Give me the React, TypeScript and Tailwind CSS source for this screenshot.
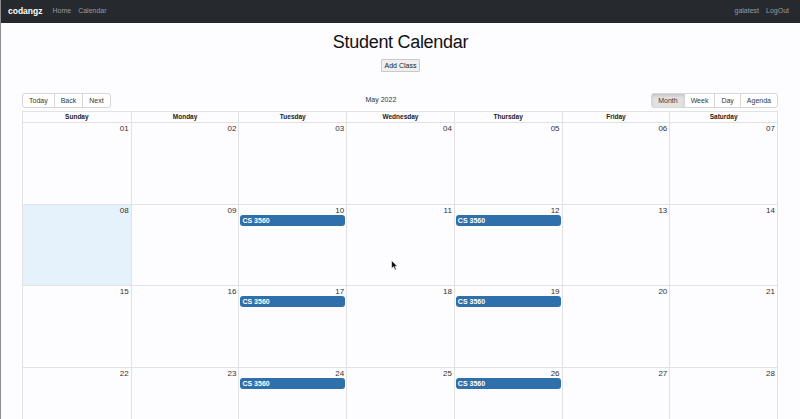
import React from "react";

const days = ["Sunday", "Monday", "Tuesday", "Wednesday", "Thursday", "Friday", "Saturday"];
const rowHeights = ["h-[82px]", "h-[81px]", "h-[82px]", "h-[82px]", "h-[82px]"];

type Cell = { label: string; today?: boolean; event?: string; off?: boolean };

function buildWeeks(): Cell[][] {
  const weeks: Cell[][] = [];
  let d = 1;
  for (let w = 0; w < 5; w++) {
    const row: Cell[] = [];
    for (let i = 0; i < 7; i++) {
      const off = d > 31;
      const n = off ? d - 31 : d;
      row.push({
        label: String(n).padStart(2, "0"),
        today: !off && n === 8,
        off,
        event: !off && n >= 10 && (i === 2 || i === 4) ? "CS 3560" : undefined,
      });
      d++;
    }
    weeks.push(row);
  }
  return weeks;
}

function ToolBtn({ children, active, first, last }: { children: React.ReactNode; active?: boolean; first?: boolean; last?: boolean }) {
  return (
    <button
      className={
        "h-[15px] px-[6px] border border-[#d6d6d6] text-[7px] leading-none text-[#373737] " +
        (first ? "rounded-l-[3px] " : "-ml-px ") +
        (last ? "rounded-r-[3px] " : "") +
        (active ? "bg-[#e2e2e2] shadow-[inset_0_2px_3px_rgba(0,0,0,0.12)] border-[#c8c8c8]" : "bg-white")
      }
    >
      {children}
    </button>
  );
}

export default function App() {
  const weeks = buildWeeks();

  return (
    <div
      className="relative h-[419px] overflow-hidden bg-[#fdfcfe] border-l border-[#8d8d8d]"
      style={{ fontFamily: '"Liberation Sans", Arial, sans-serif' }}
    >
      {/* Navbar */}
      <nav className="h-[23px] bg-[#26292d] flex items-center justify-between pl-[7px] pr-[11px]">
        <div className="flex items-center">
          <span className="text-white text-[8.5px] font-bold mr-[10px]">codangz</span>
          <span className="text-[#9a9ca0] text-[7px] mr-[7px]">Home</span>
          <span className="text-[#9a9ca0] text-[7px]">Calendar</span>
        </div>
        <div className="flex items-center gap-[7px]">
          <span className="text-[#9a9ca0] text-[7px]">galatest</span>
          <span className="text-[#9a9ca0] text-[7px]">LogOut</span>
        </div>
      </nav>

      <div className="flex flex-col items-center">
        <h1 className="mt-[8px] text-[18px] leading-[22px] tracking-[-0.3px] text-[#111] font-normal">Student Calendar</h1>
        <button className="mt-[6px] h-[13px] px-[3px] bg-[#efefef] border border-[#c9c9c9] rounded-[1px] text-[7px] leading-none text-[#222]">
          Add Class
        </button>
      </div>

      <div className="ml-[21px] mr-[22px] mt-[21px]">
        {/* Toolbar */}
        <div className="flex items-center h-[15px]">
          <div className="flex">
            <ToolBtn first>Today</ToolBtn>
            <ToolBtn>Back</ToolBtn>
            <ToolBtn last>Next</ToolBtn>
          </div>
          <span className="flex-1 text-center text-[7px] text-[#333]">May 2022</span>
          <div className="flex">
            <ToolBtn first active>Month</ToolBtn>
            <ToolBtn>Week</ToolBtn>
            <ToolBtn>Day</ToolBtn>
            <ToolBtn last>Agenda</ToolBtn>
          </div>
        </div>

        {/* Month grid */}
        <div className="mt-[3px] border border-[#e2e2e2]">
          <div className="grid grid-cols-7 h-[10px]">
            {days.map((d, i) => (
              <div
                key={d}
                className={"text-center text-[6.5px] leading-[10px] font-bold text-[#222] " + (i ? "border-l border-[#e2e2e2]" : "")}
              >
                {d}
              </div>
            ))}
          </div>
          {weeks.map((row, w) => (
            <div key={w} className={"grid grid-cols-7 border-t border-[#e2e2e2] " + rowHeights[w]}>
              {row.map((c, i) => (
                <div
                  key={i}
                  className={
                    "flex flex-col " +
                    (i ? "border-l border-[#e2e2e2] " : "") +
                    (c.today ? "bg-[#e5f2fc]" : c.off ? "bg-[#f2f2f2]" : "")
                  }
                >
                  <div className={"text-right text-[8px] leading-[9px] pr-[2px] pt-[1px] " + (c.off ? "text-[#999]" : "text-[#333]")}>
                    {c.label}
                  </div>
                  {c.event && (
                    <div className="mx-[1px] h-[11px] rounded-[3px] bg-[#3070aa] text-white text-[7px] leading-[11px] px-[2px] font-semibold">
                      {c.event}
                    </div>
                  )}
                </div>
              ))}
            </div>
          ))}
        </div>
      </div>

      {/* mouse pointer */}
      <svg className="absolute left-[390px] top-[260px]" width="8" height="11" viewBox="0 0 8 11">
        <path d="M0.5 0.5 L0.5 8.5 L2.5 6.8 L4 10 L5.3 9.4 L3.9 6.3 L6.5 6.3 Z" fill="#111" stroke="#fff" strokeWidth="0.6" />
      </svg>
    </div>
  );
}
